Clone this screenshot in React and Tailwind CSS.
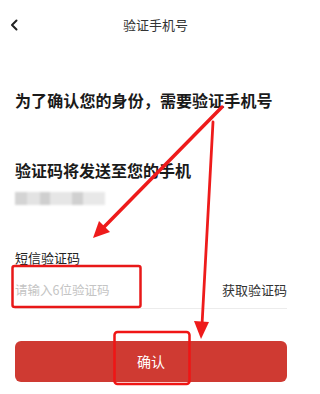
import React from "react";

export default function App() {
  return (
    <div
      className="relative w-[311px] h-[394px] bg-white overflow-hidden"
      style={{ fontFamily: '"Noto Sans CJK SC", "Noto Sans", sans-serif' }}
    >
      {/* header */}
      <div className="relative h-12 flex items-center justify-center">
        <svg className="absolute left-[10px] top-[19px]" width="8" height="12" viewBox="0 0 8 12">
          <path d="M6.5 1.5 L2 6 L6.5 10.5" fill="none" stroke="#222" strokeWidth="2" strokeLinecap="round" strokeLinejoin="round" />
        </svg>
        <span className="text-[13px] text-[#333] leading-none">验证手机号</span>
      </div>

      <div className="pl-[15px] pr-[24px] flex flex-col">
        <div className="mt-[41px] text-[16px] leading-[22px] font-bold text-[#1a1a1a] tracking-[0.1px] whitespace-nowrap">
          为了确认您的身份，需要验证手机号
        </div>
        <div className="mt-[48px] text-[16px] leading-[22px] font-semibold text-[#1a1a1a]">
          验证码将发送至您的手机
        </div>
        <div className="mt-[11px] flex h-[13px] w-[90px] blur-[1.2px]">
          <div className="w-[12px] bg-[#d4d4d4]" />
          <div className="w-[13px] bg-[#e3e3e3]" />
          <div className="w-[10px] bg-[#cfcfcf]" />
          <div className="w-[22px] bg-[#e6e6e6]" />
          <div className="w-[11px] bg-[#d0d0d0]" />
          <div className="w-[22px] bg-[#e8e8e8]" />
        </div>
        <div className="mt-[44px] text-[13px] leading-[18px] text-[#222]">短信验证码</div>
        <div className="mt-[5px] h-[37px] flex items-center justify-between border-b border-[#ececec]">
          <span className="text-[12.5px] text-[#c4c4c4]">请输入6位验证码</span>
          <span className="text-[13px] text-[#333]">获取验证码</span>
        </div>
        <button className="mt-[32px] h-[41px] w-full rounded-md bg-[#cf3a32] text-white text-[14px] flex items-center justify-center">
          确认
        </button>
      </div>

      {/* annotations */}
      <svg className="absolute inset-0 pointer-events-none" width="311" height="394" viewBox="0 0 311 394">
        <line x1="222" y1="107" x2="103" y2="228" stroke="#ee1b1b" strokeWidth="3.5" strokeLinecap="round" />
        <polygon points="93,238 110,232 99,221" fill="#ee1b1b" />
        <line x1="213" y1="122" x2="202" y2="325" stroke="#ee1b1b" strokeWidth="2.8" strokeLinecap="round" />
        <polygon points="201,339 209,322 194,321" fill="#ee1b1b" />
        <rect x="12.5" y="266" width="128" height="41" rx="2" fill="none" stroke="#e81818" strokeWidth="2.5" />
        <rect x="114.5" y="332" width="75" height="52" rx="3" fill="none" stroke="#f01515" strokeWidth="2.5" />
      </svg>
    </div>
  );
}
